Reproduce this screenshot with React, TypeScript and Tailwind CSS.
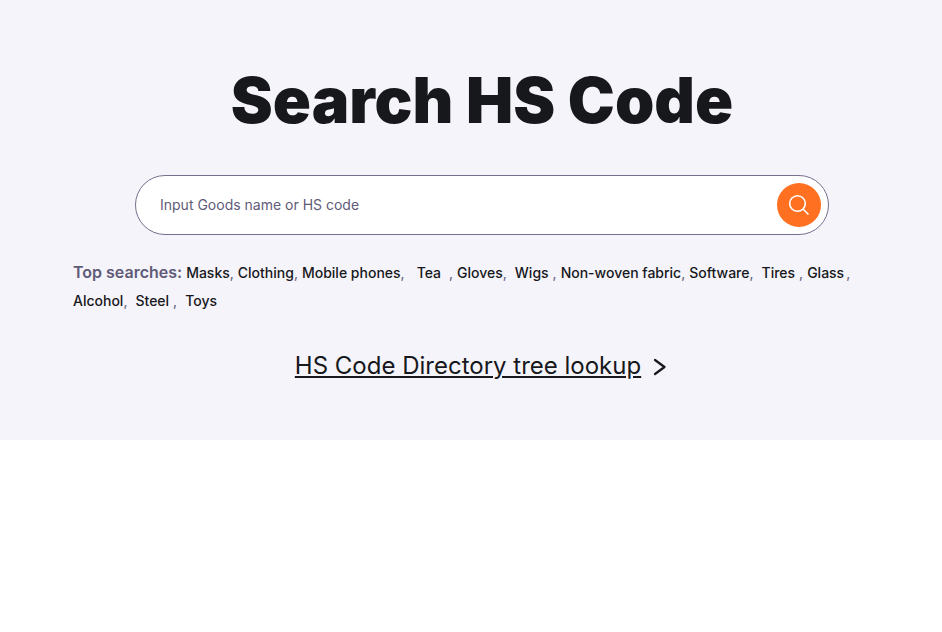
import { Fragment } from 'react';

const searches = [
  { label: 'Masks', className: '' },
  { label: 'Clothing', className: 'ml-1' },
  { label: 'Mobile phones', className: 'ml-1' },
  { label: 'Tea', className: 'ml-3 mr-2' },
  { label: 'Gloves', className: 'ml-1' },
  { label: 'Wigs', className: 'ml-2 mr-1' },
  { label: 'Non-woven fabric', className: 'ml-1' },
  { label: 'Software', className: 'ml-1' },
  { label: 'Tires', className: 'ml-2 mr-1' },
  { label: 'Glass', className: 'ml-1 mr-0.5' },
  { label: 'Alcohol', className: '' },
  { label: 'Steel', className: 'ml-2 mr-1' },
  { label: 'Toys', className: 'ml-2' },
];

export default function App() {
  return (
    <main className="min-h-screen bg-white font-['Inter',sans-serif] text-[#17181c]">
      <section className="bg-[#f5f4fa] pt-16 pr-[51px] pb-[58px] pl-[73px]">
        <h1 className="text-center text-[63px] leading-[72px] font-black">Search HS Code</h1>

        <form
          className="mx-auto mt-[39px] flex h-[60px] max-w-[694px] items-center rounded-full border border-[#74708e] bg-white pr-[7px] pl-6"
          onSubmit={(e) => e.preventDefault()}
        >
          <input
            type="text"
            aria-label="Input Goods name or HS code"
            placeholder="Input Goods name or HS code"
            className="min-w-0 flex-1 bg-transparent text-sm outline-none placeholder:text-[#5f5b78]"
          />
          <button
            type="submit"
            aria-label="Search"
            className="flex size-11 items-center justify-center rounded-full bg-[#ff7020] text-white"
          >
            <svg viewBox="0 0 24 24" className="size-6" fill="none" stroke="currentColor" strokeWidth="1.6">
              <circle cx="10.5" cy="10.5" r="7.8" />
              <path d="M16 16l5.5 5.5" />
            </svg>
          </button>
        </form>

        <p className="mt-[23px] text-sm leading-7 font-medium">
          <span className="mr-1 text-base leading-7 font-semibold text-[#5f5b78]">Top searches:</span>
          {searches.map((item, i) => (
            <Fragment key={item.label}>
              <a href="#" className={item.className}>{item.label}</a>
              {i < searches.length - 1 && <span className="font-normal text-[#5f5b78]">,<wbr /></span>}
            </Fragment>
          ))}
        </p>

        <div className="mt-[35px] flex items-center justify-center gap-3">
          <a href="#" className="text-2xl underline">HS Code Directory tree lookup</a>
          <svg
            viewBox="0 0 16 18"
            className="mt-0.5 h-[18px] w-4"
            fill="none"
            stroke="currentColor"
            strokeWidth="2.2"
            strokeLinecap="round"
            strokeLinejoin="round"
          >
            <path d="M2 2l9.5 7L2 16" />
          </svg>
        </div>
      </section>
    </main>
  );
}
